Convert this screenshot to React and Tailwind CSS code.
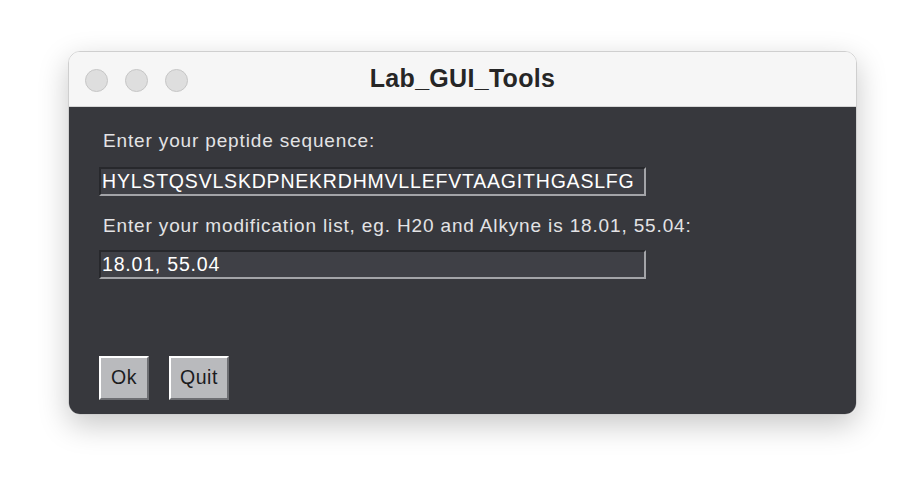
import React, { useState } from 'react';

const SEQ = 'HYLSTQSVLSKDPNEKRDHMVLLEFVTAAGITHGASLFG';

const Light = () => (
    <span className="block w-[23px] h-[23px] rounded-full bg-[#dedede] border border-[#c6c6c6]" />
);

const Entry = ({ value, onChange }) => (
    <input
        value={value}
        onChange={e => onChange(e.target.value)}
        className="block w-[547px] h-[29px] pl-[1px] bg-[#3f4046] text-white text-[19.5px] tracking-[0.8px] leading-none outline-none border-2 border-t-[#27282c] border-l-[#27282c] border-b-[#a3a4a8] border-r-[#a3a4a8]"
    />
);

const TkButton = ({ label, width }) => (
    <button className={`${width} h-[44px] bg-[#b9babd] text-[#1c1c1e] text-[19.5px] tracking-[0.5px] border-2 border-t-white border-l-white border-b-[#6d6e72] border-r-[#6d6e72]`}>
        {label}
    </button>
);

const App = () => {
    const [seq, setSeq] = useState(SEQ);
    const [mods, setMods] = useState('18.01, 55.04');

    return (
        <div className="w-[924px] h-[500px] bg-white pt-[51px] pl-[68px] font-['Liberation_Sans',Arial,sans-serif]">
            <div className="w-[789px] h-[364px] rounded-[12px] overflow-hidden border border-[#cfcfcf] shadow-[0_10px_30px_rgba(0,0,0,0.22)] flex flex-col">
                {/* Title bar */}
                <div className="h-[55px] shrink-0 bg-[#f6f6f6] border-b border-[#d6d6d6] relative flex items-center justify-center">
                    <div className="absolute left-[16px] top-[17px] flex gap-[17px]">
                        <Light /><Light /><Light />
                    </div>
                    <span className="text-[25px] tracking-[0.3px] font-bold text-[#262626]">Lab_GUI_Tools</span>
                </div>

                {/* Body */}
                <div className="flex-1 bg-[#37383d] pl-[30px] pt-[22px]">
                    <p className="pl-[4px] text-[19px] tracking-[0.85px] text-[#e3e3e5] leading-[24px]">Enter your peptide sequence:</p>
                    <div className="mt-[14px]">
                        <Entry value={seq} onChange={setSeq} />
                    </div>
                    <p className="pl-[4px] mt-[18px] text-[19px] tracking-[0.85px] text-[#e3e3e5] leading-[24px]">Enter your modification list, eg. H20 and Alkyne is 18.01, 55.04:</p>
                    <div className="mt-[12px]">
                        <Entry value={mods} onChange={setMods} />
                    </div>
                    <div className="mt-[77px] flex gap-[20px]">
                        <TkButton label="Ok" width="w-[50px]" />
                        <TkButton label="Quit" width="w-[60px]" />
                    </div>
                </div>
            </div>
        </div>
    );
};

export default App;
